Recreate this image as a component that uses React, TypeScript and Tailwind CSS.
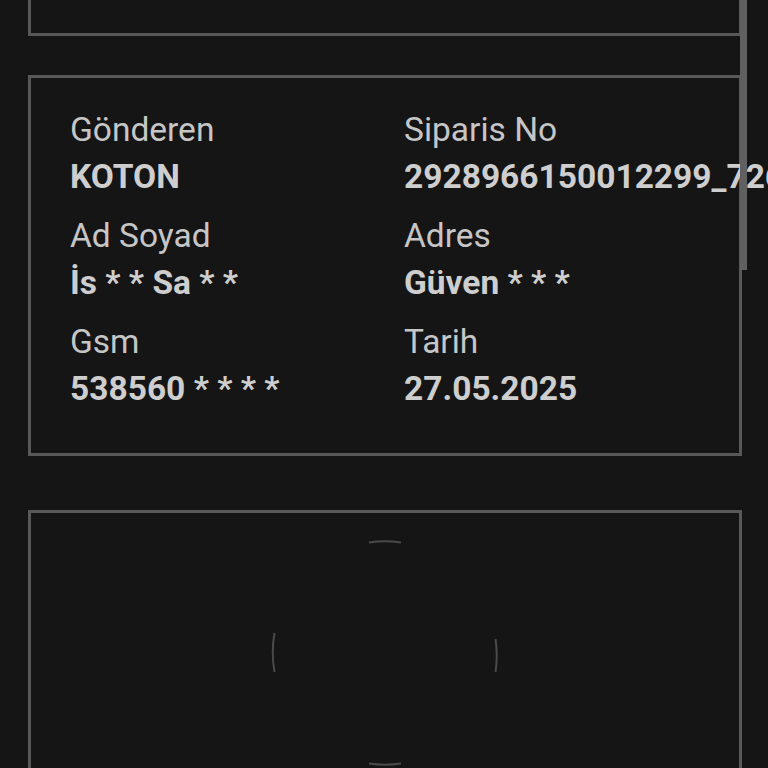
import React from "react";

const rows: [string, string, string, string][] = [
  ["Gönderen", "KOTON", "Siparis No", "2928966150012299_7261"],
  ["Ad Soyad", "İs * * Sa * *", "Adres", "Güven * * *"],
  ["Gsm", "538560 * * * *", "Tarih", "27.05.2025"],
];

function Field({ label, value }: { label: string; value: string }) {
  return (
    <div className="mb-[15px] last:mb-0">
      <div className="text-[33.5px] leading-[44px] text-[#c6c6c6] whitespace-nowrap">{label}</div>
      <div className="mt-[3px] text-[33.5px] leading-[44px] font-bold text-[#cecece] whitespace-nowrap">{value}</div>
    </div>
  );
}

export default function App() {
  return (
    <div
      className="relative w-[768px] h-[768px] overflow-hidden bg-[#151515]"
      style={{ fontFamily: "Roboto, 'Noto Sans', sans-serif" }}
    >
      <div className="flex flex-col pl-[28px] w-[742px]">
        {/* previous card, mostly scrolled away */}
        <div className="h-[36px] border-x-[3px] border-b-[3px] border-[#585858]" />

        {/* shipment info */}
        <div className="mt-[39px] border-[3px] border-[#585858] pt-[30px] pb-[42px] pl-[39px] grid grid-cols-[334px_1fr]">
          <div>
            {rows.map((r) => (
              <Field key={r[0]} label={r[0]} value={r[1]} />
            ))}
          </div>
          <div>
            {rows.map((r) => (
              <Field key={r[2]} label={r[2]} value={r[3]} />
            ))}
          </div>
        </div>

        {/* loading card */}
        <div className="mt-[54px] h-[300px] border-x-[3px] border-t-[3px] border-[#585858] flex justify-center">
          <svg width="240" height="240" viewBox="0 0 240 240" className="mt-[20px]" fill="none" stroke="#4a4a4a" strokeWidth="2">
            <path d="M104 9.5 A111 111 0 0 1 136 9.5" />
            <path d="M104 230.5 A111 111 0 0 0 136 230.5" />
            <path d="M9.5 100 A111 111 0 0 0 9.5 139" />
            <path d="M230.5 106 A111 111 0 0 1 230.5 139" />
          </svg>
        </div>
      </div>

      {/* scrollbar thumb */}
      <div className="absolute left-[740px] top-0 w-[7px] h-[270px] bg-[#606060]" />
    </div>
  );
}
